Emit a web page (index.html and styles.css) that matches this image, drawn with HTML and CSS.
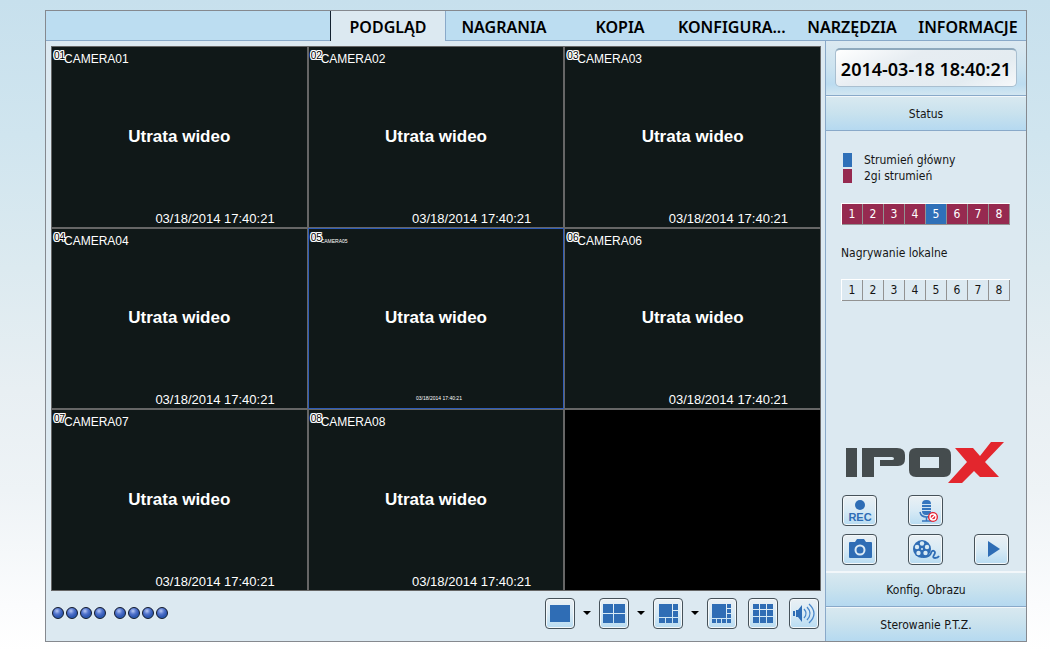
FILE: index.html
```html
<!DOCTYPE html>
<html lang="pl">
<head>
<meta charset="utf-8">
<title>IPOX</title>
<link rel="stylesheet" href="styles.css">
</head>
<body>
<div class="window">
  <nav class="tabs">
    <a class="tab tab-active" href="#podglad" aria-current="page">PODGLĄD</a>
    <a class="tab" href="#nagrania">NAGRANIA</a>
    <a class="tab" href="#kopia">KOPIA</a>
    <a class="tab tab-long" href="#konfiguracja">KONFIGURA...</a>
    <a class="tab" href="#narzedzia">NARZĘDZIA</a>
    <a class="tab" href="#informacje">INFORMACJE</a>
  </nav>
  <div class="content">
    <main class="viewer">
      <div class="grid">
        <section class="cell"><span class="num">01</span><span class="name">CAMERA01</span><strong class="lost">Utrata wideo</strong><time class="stamp">03/18/2014 17:40:21</time></section>
        <section class="cell"><span class="num">02</span><span class="name">CAMERA02</span><strong class="lost">Utrata wideo</strong><time class="stamp">03/18/2014 17:40:21</time></section>
        <section class="cell"><span class="num">03</span><span class="name">CAMERA03</span><strong class="lost">Utrata wideo</strong><time class="stamp">03/18/2014 17:40:21</time></section>
        <section class="cell"><span class="num">04</span><span class="name">CAMERA04</span><strong class="lost">Utrata wideo</strong><time class="stamp">03/18/2014 17:40:21</time></section>
        <section class="cell cell-selected"><span class="num">05</span><span class="name">CAMERA05</span><strong class="lost">Utrata wideo</strong><time class="stamp">03/18/2014 17:40:21</time></section>
        <section class="cell"><span class="num">06</span><span class="name">CAMERA06</span><strong class="lost">Utrata wideo</strong><time class="stamp">03/18/2014 17:40:21</time></section>
        <section class="cell"><span class="num">07</span><span class="name">CAMERA07</span><strong class="lost">Utrata wideo</strong><time class="stamp">03/18/2014 17:40:21</time></section>
        <section class="cell"><span class="num">08</span><span class="name">CAMERA08</span><strong class="lost">Utrata wideo</strong><time class="stamp">03/18/2014 17:40:21</time></section>
        <section class="cell cell-empty"></section>
      </div>
      <div class="toolbar">
        <div class="leds">
          <div class="led-group"><i class="led"></i><i class="led"></i><i class="led"></i><i class="led"></i></div>
          <div class="led-group"><i class="led"></i><i class="led"></i><i class="led"></i><i class="led"></i></div>
        </div>
        <div class="layouts">
          <button class="btn" aria-label="1"><svg width="28" height="29" viewBox="0 0 28 29"><path fill="#2f6db5" d="M4 6h20v17H4z"/></svg></button>
          <button class="arrow" aria-label="Menu 1"><svg width="8" height="4" viewBox="0 0 8 4"><path d="M0 0h8L4 4z"/></svg></button>
          <button class="btn" aria-label="4"><svg width="28" height="29" viewBox="0 0 28 29"><path fill="#2f6db5" d="M3 5h10v9H3zM14 5h11v9H14zM3 15h10v9H3zM14 15h11v9H14z"/></svg></button>
          <button class="arrow" aria-label="Menu 4"><svg width="8" height="4" viewBox="0 0 8 4"><path d="M0 0h8L4 4z"/></svg></button>
          <button class="btn" aria-label="6"><svg width="28" height="29" viewBox="0 0 28 29"><path fill="#2f6db5" d="M5 5h13v13H5zM19 5h5v6h-5zM19 12h5v6h-5zM5 19h6v5H5zM12 19h6v5h-6zM19 19h5v5h-5z"/></svg></button>
          <button class="arrow" aria-label="Menu 6"><svg width="8" height="4" viewBox="0 0 8 4"><path d="M0 0h8L4 4z"/></svg></button>
          <button class="btn" aria-label="8"><svg width="28" height="29" viewBox="0 0 28 29"><path fill="#2f6db5" d="M4 5h14v14H4zM19 5h4v4h-4zM19 10h4v4h-4zM19 15h4v4h-4zM4 20h4v4H4zM9 20h4v4H9zM14 20h4v4h-4zM19 20h4v4h-4z"/></svg></button>
          <button class="btn btn-spaced" aria-label="9"><svg width="28" height="29" viewBox="0 0 28 29"><path fill="#2f6db5" d="M4 5h6v5H4zM11 5h6v5h-6zM18 5h6v5h-6zM4 11h6v6H4zM11 11h6v6h-6zM18 11h6v6h-6zM4 18h6v6H4zM11 18h6v6h-6zM18 18h6v6h-6z"/></svg></button>
          <button class="btn btn-spaced" aria-label="Audio"><svg width="28" height="29" viewBox="0 0 28 29"><path fill="#2f6db5" d="M3 12h2v5H3zM6 11h2l4-5v17l-4-5H6z"/><g fill="none" stroke="#4a88cb" stroke-width="1.300"><path d="M14 10q4 4.500 0 9"/><path d="M17 8q6 6.500 0 13"/><path d="M19 5q10 9.500 0 19"/></g></svg></button>
        </div>
      </div>
    </main>
    <aside class="side">
      <div class="clock-panel"><time class="clock">2014-03-18 18:40:21</time></div>
      <button class="bar">Status</button>
      <div class="status">
        <ul class="legend">
          <li><i class="swatch swatch-main"></i>Strumień główny</li>
          <li><i class="swatch"></i>2gi strumień</li>
        </ul>
        <div class="channels channels-stream">
          <button>1</button><button>2</button><button>3</button><button>4</button><button class="main-stream">5</button><button>6</button><button>7</button><button>8</button>
        </div>
        <p class="label">Nagrywanie lokalne</p>
        <div class="channels">
          <button>1</button><button>2</button><button>3</button><button>4</button><button>5</button><button>6</button><button>7</button><button>8</button>
        </div>
        <svg class="logo" width="160" height="42" viewBox="0 0 160 42" role="img" aria-label="IPOX"><path fill="#454c4e" fill-rule="evenodd" d="M0 6h11v29H0zM16 6h35q8 0 8 7v4q0 7-7 7H34v-6h12q2 0 2-1.500t-2-1.500H28v20H16zM70 6h28q7 0 7 7v15q0 7-7 7H70q-7 0-7-7V13q0-7 7-7zM74 15v11h19V15z"/><path fill="#e3262d" d="M109 6h18l7 8 11-14h13l-19 20 14 15h-19l-6-6-12 12h-14l19-21z"/></svg>
        <div class="actions">
          <button class="btn btn-wide" aria-label="REC"><svg width="33" height="29" viewBox="0 0 33 29"><circle cx="17" cy="9" r="5" fill="#2f6db5"/><text class="rec" x="17" y="25" text-anchor="middle">REC</text></svg></button>
          <button class="btn btn-wide" aria-label="Mikrofon"><svg width="33" height="29" viewBox="0 0 33 29"><rect x="13" y="4" width="9" height="15" rx="4" fill="#3676be"/><path d="M13 8.500h9M13 11.500h9M13 14.500h9" stroke="#cfe3f2"/><path d="M11 16q1 5 6.500 5t6.500-5M17.500 21v4M13 25h10" fill="none" stroke="#3676be" stroke-width="1.500"/><circle cx="24" cy="21" r="5" fill="#e62432"/><circle cx="24" cy="21" r="3" fill="none" stroke="#fff" stroke-width="1.300"/><path d="M22 23l4-4" stroke="#fff" stroke-width="1.300"/></svg></button>
          <span></span>
          <button class="btn btn-wide" aria-label="Zdjęcie"><svg width="33" height="29" viewBox="0 0 33 29"><path fill="#2f6db5" d="M7 7h5l2-3h7l2 3h5q1 0 1 1v14q0 1-1 1H7q-1 0-1-1V8q0-1 1-1z"/><circle cx="17" cy="15" r="4.500" fill="#2f6db5" stroke="#dcebf5" stroke-width="2"/></svg></button>
          <button class="btn btn-wide" aria-label="Film"><svg width="33" height="29" viewBox="0 0 33 29"><circle cx="13" cy="14" r="9" fill="#2f6db5"/><g fill="#d8eaf5"><circle cx="13" cy="8.500" r="2.200"/><circle cx="18" cy="12" r="2.200"/><circle cx="16.500" cy="18" r="2.200"/><circle cx="9.500" cy="18" r="2.200"/><circle cx="8" cy="12" r="2.200"/><circle cx="13" cy="14" r="1"/></g><path d="M14 22q7 0 8-4 1-3 3-2t0 4 1 3 4-2" fill="none" stroke="#2f6db5" stroke-width="1.800"/></svg></button>
          <button class="btn btn-wide" aria-label="Odtwarzaj"><svg width="33" height="29" viewBox="0 0 33 29"><path fill="#2f6db5" d="M13 6l12 8-12 8z"/></svg></button>
        </div>
      </div>
      <button class="bar bar-open">Konfig. Obrazu</button>
      <button class="bar">Sterowanie P.T.Z.</button>
    </aside>
  </div>
</div>
</body>
</html>
```

FILE: styles.css
```css
* { box-sizing: border-box; }

body {
  margin: 0;
  min-height: 100vh;
  padding: 10px 23px 30px 45px;
  display: flex;
  background: linear-gradient(#c7e0ed 0, #d0e5ef 20%, #dceaf0 40%, #e8eff3 58%, #eef3f6 73%, #fbfcfd 90%, #fff 97%);
  font: 12px/16px "DejaVu Sans Condensed", "Noto Sans", sans-serif;
  color: #151515;
}

button {
  margin: 0;
  padding: 0;
  border: 0;
  background: none;
  font: inherit;
  color: inherit;
}

svg { display: block; }

.window {
  flex: 1;
  display: flex;
  flex-direction: column;
  border: 1px solid #85898f;
  background: #dce9f1;
}

.tabs {
  display: flex;
  justify-content: flex-end;
  height: 30px;
  background: #bcddf1;
  border-bottom: 1px solid #89a9c9;
}

.tab {
  width: 116px;
  height: 30px;
  text-align: center;
  font: 600 16px/32px "Noto Sans", sans-serif;
  color: #000;
  text-decoration: none;
  white-space: nowrap;
}

.tab-long { text-align: left; }

.tab-active {
  background: #dce9f1;
  border-left: 1px solid #142230;
  border-right: 1px solid #89a9c9;
}

.content { flex: 1; display: flex; }

.viewer {
  flex: 1;
  display: flex;
  flex-direction: column;
  padding: 5px 4px 0 5px;
}

.grid {
  flex: 1;
  display: grid;
  grid-template-columns: repeat(3, 1fr);
  grid-template-rows: repeat(3, 1fr);
  gap: 2px;
  border: 1px solid #666;
  background: #666;
}

.cell {
  position: relative;
  display: flex;
  flex-direction: column;
  justify-content: space-between;
  padding: 4px 0 0 12px;
  background: #101818;
  color: #fff;
  font: 13px/16px "Liberation Sans", sans-serif;
}

.cell-empty { background: #000; }
.cell-selected { outline: 1px solid #2f5cb8; }

.num {
  position: absolute;
  left: 2px;
  top: 3px;
  font: 10px/12px "Liberation Sans", sans-serif;
  color: #000;
  text-shadow: 1px 0 #fff, -1px 0 #fff, 0 1px #fff, 0 -1px #fff, 1px 1px #fff, -1px -1px #fff, 1px -1px #fff, -1px 1px #fff;
}

.name { font-size: 12px; }

.lost {
  font-size: 17px;
  line-height: 20px;
  text-align: center;
  margin: 0 12px 4px 0;
}

.stamp { align-self: flex-end; margin-right: 32px; }

.cell-selected .name,
.cell-selected .stamp { font-size: 5px; }

.cell-selected .stamp {
  align-self: center;
  margin: 0 6px 4px 0;
  line-height: 12px;
}

.toolbar {
  display: flex;
  justify-content: space-between;
  align-items: center;
  height: 50px;
  padding: 0 2px 6px 1px;
}

.leds { display: flex; gap: 8px; }
.led-group { display: flex; gap: 2px; }

.led {
  width: 12px;
  height: 12px;
  border: 1px solid #10182c;
  border-radius: 50%;
  background: radial-gradient(circle at 40% 30%, #b8c8f4 0, #5274cc 35%, #2d55b0 65%, #2a86cc 100%);
}

.layouts { display: flex; align-items: center; }

.btn {
  width: 30px;
  height: 31px;
  border: 1px solid #46525a;
  border-radius: 4px;
  background: linear-gradient(#eaf0f4, #d8eaf5 50%, #b8dcf2);
  box-shadow: inset 0 0 0 1px #f4f8fa;
}

.btn-wide { width: 35px; }
.btn-spaced { margin-left: 11px; }
.arrow { width: 24px; height: 30px; }
.arrow svg { margin: 0 auto; }

.side {
  width: 201px;
  display: flex;
  flex-direction: column;
  border-left: 1px solid #89a9c9;
}

.clock-panel {
  height: 54px;
  padding: 7px 9px 8px;
  background: linear-gradient(#dce9f1, #cce3f0 50%, #bcdcf0 80%, #d2e6f1);
}

.clock {
  display: block;
  height: 39px;
  border: 1px solid #a9bfd0;
  border-top: 2px solid #8fa9bd;
  border-radius: 5px;
  background: linear-gradient(155deg, #fff 0, #e7edf2 35%, #e4ecf1 75%, #f6f8fa 100%);
  text-align: center;
  font: 600 18px/38px "Noto Sans", sans-serif;
  color: #000;
}

.bar {
  height: 35px;
  padding-top: 2px;
  border-top: 1px solid #89a9c9;
  background: linear-gradient(#d9e9f0, #c9e2ee 50%, #b5d9f0);
  box-shadow: inset 0 1px #f2f7fa;
}

.bar-open { border-top-color: #f2f7fa; }

.status {
  flex: 1;
  display: flex;
  flex-direction: column;
  align-items: flex-start;
  padding: 21px 0 6px 15px;
  border-top: 1px solid #89a9c9;
}

.legend { list-style: none; margin: 0 0 19px; padding: 0; }
.legend li { display: flex; align-items: center; gap: 12px; padding-left: 2px; }
.swatch { width: 9px; height: 14px; background: #962a50; }
.swatch-main { background: #2f70b8; }

.channels {
  display: flex;
  border-top: 1px solid #fff;
  border-left: 1px solid #fff;
}

.channels button {
  width: 21px;
  height: 21px;
  border-right: 1px solid #929292;
  border-bottom: 1px solid #929292;
}

.channels-stream { color: #fff; }
.channels-stream button { background: #962a50; }
.channels-stream .main-stream { background: #2f70b8; }

.label { margin: 20px 0 18px; }

.logo { margin: auto 0 11px 5px; }

.actions {
  display: grid;
  grid-template-columns: repeat(3, 35px);
  gap: 8px 31px;
  margin-left: 1px;
}

.rec {
  font: bold 11px "Liberation Sans", sans-serif;
  fill: #2f6db5;
}
```
